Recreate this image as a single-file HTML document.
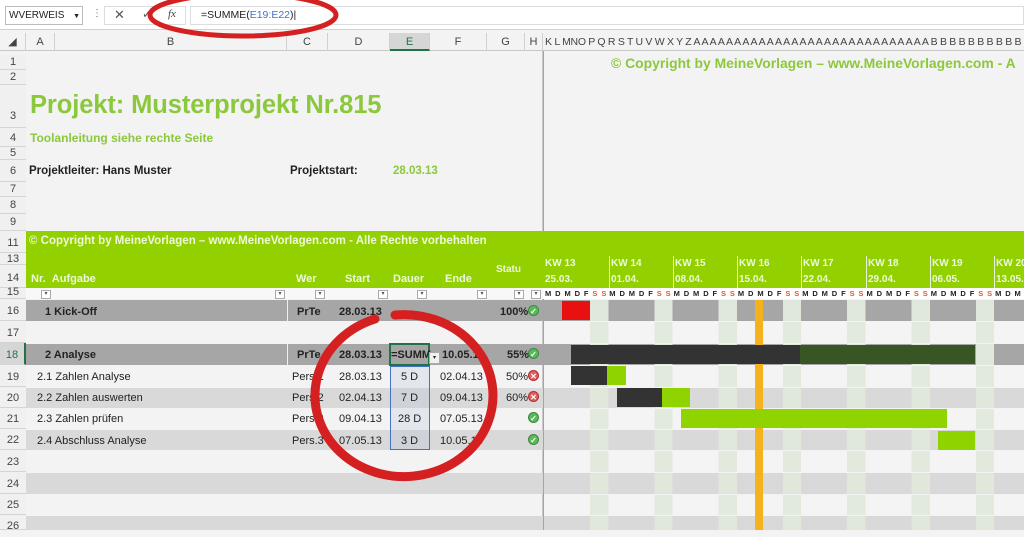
<!DOCTYPE html>
<html><head><meta charset="utf-8"><style>
*{margin:0;padding:0;box-sizing:border-box}
body{width:1024px;height:530px;overflow:hidden;background:#f3f3f3;font-family:"Liberation Sans",sans-serif;position:relative;color:#222}
.a{position:absolute;white-space:nowrap}
.rh{position:absolute;left:0;width:26px;font-size:11px;color:#444;text-align:center;border-bottom:1px solid #d4d4d4;background:#f0f0f0}
.ch{position:absolute;top:33px;height:18px;font-size:11px;color:#444;text-align:center;line-height:18px;border-right:1px solid #d0d0d0}
.row{position:absolute;left:26px;width:517px}
.g{position:absolute;left:544px;width:480px;background-image:repeating-linear-gradient(to right,transparent 0 46px,var(--w) 46px 64.3px)}
.t{position:absolute;font-size:11px;white-space:nowrap}
.b{font-weight:bold}
.fb{position:absolute;top:290px;width:10px;height:9px;border:1px solid #aaa;background:#fff;font-size:6px;line-height:7px;text-align:center;color:#555}
.ic{position:absolute;width:11px;height:11px;border-radius:50%;font-size:8px;line-height:11px;text-align:center;color:#fff;font-weight:bold}
.ok{background:#5cb85c;border:1px solid #3a8a3a}
.no{background:#e06060;border:1px solid #b03030}
.wk{display:inline-block;width:64.3px;letter-spacing:3.9px;text-indent:2px;overflow:hidden}
.wk i{font-style:normal;color:#e05a2a}
</style></head><body>
<div class="a" style="left:0;top:0;width:1024px;height:30px;background:#fff;border-bottom:1px solid #d0d0d0"></div>
<div class="a" style="left:5px;top:6px;width:78px;height:19px;border:1px solid #bbb;font-size:10px;line-height:17px;padding-left:3px">WVERWEIS <span style="font-size:7px;margin-left:6px">▼</span></div>
<div class="a" style="left:92px;top:8px;font-size:10px;color:#666">⋮</div>
<div class="a" style="left:104px;top:6px;width:82px;height:19px;border:1px solid #ddd"></div>
<div class="a" style="left:114px;top:7px;font-size:13px;color:#555">✕</div>
<div class="a" style="left:142px;top:7px;font-size:12px;color:#555">✓</div>
<div class="a" style="left:168px;top:8px;font-size:11px;font-style:italic;font-family:'Liberation Serif',serif;color:#444">fx</div>
<div class="a" style="left:190px;top:6px;width:834px;height:19px;border:1px solid #ddd;font-size:10.5px;line-height:17px;padding-left:10px">=SUMME(<span style="color:#4472c4">E19:E22</span>)|</div>
<div class="a" style="left:0;top:33px;width:1024px;height:18px;background:#f3f3f3;border-bottom:1px solid #c8c8c8"></div>
<div class="ch" style="left:0;width:26px">◢</div>
<div class="ch" style="left:26px;width:29px">A</div>
<div class="ch" style="left:55px;width:232px">B</div>
<div class="ch" style="left:287px;width:41px">C</div>
<div class="ch" style="left:328px;width:62px">D</div>
<div class="ch" style="left:390px;width:40px;background:#d6d6d6;border-bottom:2px solid #217346;color:#217346">E</div>
<div class="ch" style="left:430px;width:57px">F</div>
<div class="ch" style="left:487px;width:38px">G</div>
<div class="ch" style="left:525px;width:18px">H</div>
<div class="a" style="left:545px;top:36px;font-size:10.5px;letter-spacing:-0.3px;color:#444">K L MNO P Q R S T U V W X Y Z A A A A A A A A A A A A A A A A A A A A A A A A A A A A A B B B B B B B B B B B B</div>
<div class="a" style="left:543px;top:51px;width:1px;height:479px;background:#8fbf50"></div>
<div class="a" style="left:542px;top:51px;width:1px;height:479px;background:#c8c8c8"></div>
<div class="rh" style="top:55px;height:15px;line-height:15px">1</div>
<div class="rh" style="top:70px;height:15px;line-height:15px">2</div>
<div class="rh" style="top:85px;height:43px;line-height:62px">3</div>
<div class="rh" style="top:128px;height:19px;line-height:20px">4</div>
<div class="rh" style="top:147px;height:13px;line-height:13px">5</div>
<div class="rh" style="top:160px;height:22px;line-height:22px">6</div>
<div class="rh" style="top:182px;height:15px;line-height:15px">7</div>
<div class="rh" style="top:197px;height:17px;line-height:17px">8</div>
<div class="rh" style="top:214px;height:17px;line-height:17px">9</div>
<div class="rh" style="top:231px;height:22px;line-height:24px">11</div>
<div class="rh" style="top:253px;height:12px;line-height:12px">13</div>
<div class="rh" style="top:265px;height:23px;line-height:26px">14</div>
<div class="rh" style="top:288px;height:11px;line-height:8px">15</div>
<div class="rh" style="top:299px;height:22px;line-height:24px">16</div>
<div class="rh" style="top:321px;height:22px;line-height:24px">17</div>
<div class="rh" style="top:343px;height:22px;line-height:24px;background:#d6d6d6;color:#217346;border-right:2px solid #217346">18</div>
<div class="rh" style="top:365px;height:22px;line-height:24px">19</div>
<div class="rh" style="top:387px;height:21px;line-height:22px">20</div>
<div class="rh" style="top:408px;height:21px;line-height:22px">21</div>
<div class="rh" style="top:429px;height:21px;line-height:22px">22</div>
<div class="rh" style="top:450px;height:22px;line-height:24px">23</div>
<div class="rh" style="top:472px;height:22px;line-height:24px">24</div>
<div class="rh" style="top:494px;height:21px;line-height:22px">25</div>
<div class="rh" style="top:515px;height:15px;line-height:22px">26</div>
<div class="a b" style="left:611px;top:55px;font-size:13.9px;color:#8cc83c">© Copyright by MeineVorlagen – www.MeineVorlagen.com - A</div>
<div class="a b" style="left:30px;top:91px;font-size:25.5px;color:#8cc83c;letter-spacing:-0.1px">Projekt: Musterprojekt Nr.815</div>
<div class="a b" style="left:30px;top:131px;font-size:12px;color:#8cc83c">Toolanleitung siehe rechte Seite</div>
<div class="a b" style="left:29px;top:165px;font-size:11.5px">Projektleiter: Hans Muster</div>
<div class="a b" style="left:290px;top:165px;font-size:11.5px">Projektstart:</div>
<div class="a b" style="left:393px;top:165px;font-size:11.5px;color:#8cc83c">28.03.13</div>
<div class="a" style="left:26px;top:231px;width:998px;height:57px;background:#92d000"></div>
<div class="a b" style="left:29px;top:235px;font-size:11.5px;color:#eef8dd">© Copyright by MeineVorlagen – www.MeineVorlagen.com - Alle Rechte vorbehalten</div>
<div class="a b" style="left:31px;top:273px;font-size:11px;color:#eef8dd">Nr.&nbsp;&nbsp;Aufgabe</div>
<div class="a b" style="left:296px;top:273px;font-size:11px;color:#eef8dd">Wer</div>
<div class="a b" style="left:345px;top:273px;font-size:11px;color:#eef8dd">Start</div>
<div class="a b" style="left:393px;top:273px;font-size:11px;color:#eef8dd">Dauer</div>
<div class="a b" style="left:445px;top:273px;font-size:11px;color:#eef8dd">Ende</div>
<div class="a b" style="left:496px;top:264px;font-size:10px;color:#eef8dd">Statu</div>
<div class="a" style="left:543px;top:288px;width:481px;height:11px;background:#fff"></div>
<div class="a" style="left:26px;top:288px;width:517px;height:11px;background:#f8f8f8"></div>
<div class="fb" style="left:41px">▾</div><div class="fb" style="left:275px">▾</div><div class="fb" style="left:315px">▾</div><div class="fb" style="left:378px">▾</div><div class="fb" style="left:417px">▾</div><div class="fb" style="left:477px">▾</div><div class="fb" style="left:514px">▾</div><div class="fb" style="left:531px">▾</div>
<div class="row" style="top:300px;height:21px;background:#a6a6a6"></div>
<div class="a" style="left:287px;top:300px;width:1px;height:21px;background:#eee"></div>
<div class="row" style="top:344px;height:21px;background:#a6a6a6"></div>
<div class="a" style="left:287px;top:344px;width:1px;height:21px;background:#eee"></div>
<div class="row" style="top:388px;height:20px;background:#d9d9d9"></div>
<div class="row" style="top:430px;height:20px;background:#d9d9d9"></div>
<div class="row" style="top:473px;height:21px;background:#d9d9d9"></div>
<div class="row" style="top:516px;height:14px;background:#d9d9d9"></div>
<div class="g" style="top:300px;height:21px;background-color:#a6a6a6;--w:#dfe8da"></div>
<div class="g" style="top:322px;height:21px;background-color:#f4f4f4;--w:#e1eadc"></div>
<div class="g" style="top:344px;height:21px;background-color:#a6a6a6;--w:#dfe8da"></div>
<div class="g" style="top:366px;height:21px;background-color:#f4f4f4;--w:#e1eadc"></div>
<div class="g" style="top:388px;height:20px;background-color:#d9d9d9;--w:#dfe8da"></div>
<div class="g" style="top:409px;height:20px;background-color:#f4f4f4;--w:#e1eadc"></div>
<div class="g" style="top:430px;height:20px;background-color:#d9d9d9;--w:#dfe8da"></div>
<div class="g" style="top:451px;height:21px;background-color:#f4f4f4;--w:#e1eadc"></div>
<div class="g" style="top:473px;height:21px;background-color:#d9d9d9;--w:#dfe8da"></div>
<div class="g" style="top:495px;height:20px;background-color:#f4f4f4;--w:#e1eadc"></div>
<div class="g" style="top:516px;height:14px;background-color:#d9d9d9;--w:#dfe8da"></div>
<div class="a" style="left:755px;top:300px;width:8px;height:230px;background:#f5b11e"></div>
<div class="a" style="left:562px;top:301px;width:28px;height:19px;background:#e81010"></div>
<div class="a" style="left:571px;top:345px;width:229px;height:19px;background:#333"></div>
<div class="a" style="left:800px;top:345px;width:175px;height:19px;background:#375623"></div>
<div class="a" style="left:571px;top:366px;width:36px;height:19px;background:#333"></div>
<div class="a" style="left:607px;top:366px;width:19px;height:19px;background:#8fd400"></div>
<div class="a" style="left:617px;top:388px;width:45px;height:19px;background:#333"></div>
<div class="a" style="left:662px;top:388px;width:28px;height:19px;background:#8fd400"></div>
<div class="a" style="left:681px;top:409px;width:266px;height:19px;background:#8fd400"></div>
<div class="a" style="left:938px;top:431px;width:37px;height:19px;background:#8fd400"></div>
<div class="t b" style="left:45px;top:306px">1 Kick-Off</div>
<div class="t b" style="left:297px;top:306px">PrTe</div>
<div class="t b" style="left:339px;top:306px">28.03.13</div>
<div class="t b" style="left:500px;top:306px">100%</div>
<div class="ic ok" style="left:528px;top:305px">✓</div>
<div class="t b" style="left:45px;top:349px">2 Analyse</div>
<div class="t b" style="left:297px;top:349px">PrTe</div>
<div class="t b" style="left:339px;top:349px">28.03.13</div>
<div class="a" style="left:389px;top:343px;width:41px;height:23px;border:2px solid #217346;background:#a6a6a6"></div>
<div class="t b" style="left:391px;top:349px">=SUMM</div>
<div class="a" style="left:429px;top:352px;width:11px;height:12px;background:#f0f0f0;border:1px solid #aaa;font-size:6px;text-align:center;line-height:10px">▾</div>
<div class="t b" style="left:442px;top:349px">10.05.1</div>
<div class="t b" style="left:507px;top:349px">55%</div>
<div class="ic ok" style="left:528px;top:348px">✓</div>
<div class="a" style="left:390px;top:366px;width:40px;height:84px;border:1px solid #4472c4;background:rgba(180,195,220,.25)"></div>
<div class="t" style="left:37px;top:371px">2.1 Zahlen Analyse</div>
<div class="t" style="left:292px;top:371px">Pers.1</div>
<div class="t" style="left:339px;top:371px">28.03.13</div>
<div class="t" style="left:401px;top:371px">5 D</div>
<div class="t" style="left:440px;top:371px">02.04.13</div>
<div class="t" style="left:506px;top:371px">50%</div>
<div class="ic no" style="left:528px;top:370px">✕</div>
<div class="t" style="left:37px;top:392px">2.2 Zahlen auswerten</div>
<div class="t" style="left:292px;top:392px">Pers.2</div>
<div class="t" style="left:339px;top:392px">02.04.13</div>
<div class="t" style="left:401px;top:392px">7 D</div>
<div class="t" style="left:440px;top:392px">09.04.13</div>
<div class="t" style="left:506px;top:392px">60%</div>
<div class="ic no" style="left:528px;top:391px">✕</div>
<div class="t" style="left:37px;top:413px">2.3 Zahlen prüfen</div>
<div class="t" style="left:292px;top:413px">Pers.2</div>
<div class="t" style="left:339px;top:413px">09.04.13</div>
<div class="t" style="left:398px;top:413px">28 D</div>
<div class="t" style="left:440px;top:413px">07.05.13</div>
<div class="ic ok" style="left:528px;top:412px">✓</div>
<div class="t" style="left:37px;top:435px">2.4 Abschluss Analyse</div>
<div class="t" style="left:292px;top:435px">Pers.3</div>
<div class="t" style="left:339px;top:435px">07.05.13</div>
<div class="t" style="left:401px;top:435px">3 D</div>
<div class="t" style="left:440px;top:435px">10.05.13</div>
<div class="ic ok" style="left:528px;top:434px">✓</div>
<div class="a b" style="left:545px;top:256px;font-size:10px;color:#eef8dd;line-height:16px">KW 13<br>25.03.</div>
<div class="a b" style="left:609px;top:256px;font-size:10px;color:#eef8dd;line-height:16px;border-left:1px solid #e8f5d0;padding-left:1px">KW 14<br>01.04.</div>
<div class="a b" style="left:673px;top:256px;font-size:10px;color:#eef8dd;line-height:16px;border-left:1px solid #e8f5d0;padding-left:1px">KW 15<br>08.04.</div>
<div class="a b" style="left:737px;top:256px;font-size:10px;color:#eef8dd;line-height:16px;border-left:1px solid #e8f5d0;padding-left:1px">KW 16<br>15.04.</div>
<div class="a b" style="left:801px;top:256px;font-size:10px;color:#eef8dd;line-height:16px;border-left:1px solid #e8f5d0;padding-left:1px">KW 17<br>22.04.</div>
<div class="a b" style="left:866px;top:256px;font-size:10px;color:#eef8dd;line-height:16px;border-left:1px solid #e8f5d0;padding-left:1px">KW 18<br>29.04.</div>
<div class="a b" style="left:930px;top:256px;font-size:10px;color:#eef8dd;line-height:16px;border-left:1px solid #e8f5d0;padding-left:1px">KW 19<br>06.05.</div>
<div class="a b" style="left:994px;top:256px;font-size:10px;color:#eef8dd;line-height:16px;border-left:1px solid #e8f5d0;padding-left:1px">KW 20<br>13.05.</div>
<div class="a" style="left:543px;top:289px;width:481px;font-size:7.5px;font-weight:bold;color:#222;overflow:hidden"><span class="wk">MDMDF<i>SS</i></span><span class="wk">MDMDF<i>SS</i></span><span class="wk">MDMDF<i>SS</i></span><span class="wk">MDMDF<i>SS</i></span><span class="wk">MDMDF<i>SS</i></span><span class="wk">MDMDF<i>SS</i></span><span class="wk">MDMDF<i>SS</i></span><span class="wk">MDM</span></div>
<svg class="a" style="left:0;top:0" width="1024" height="530">
<ellipse cx="243" cy="15" rx="93" ry="21" fill="none" stroke="#d42020" stroke-width="5"/>
<path d="M395 315 A89 81 0 1 1 375 319" fill="none" stroke="#d42020" stroke-width="9" stroke-linecap="round"/>
</svg>
</body></html>
